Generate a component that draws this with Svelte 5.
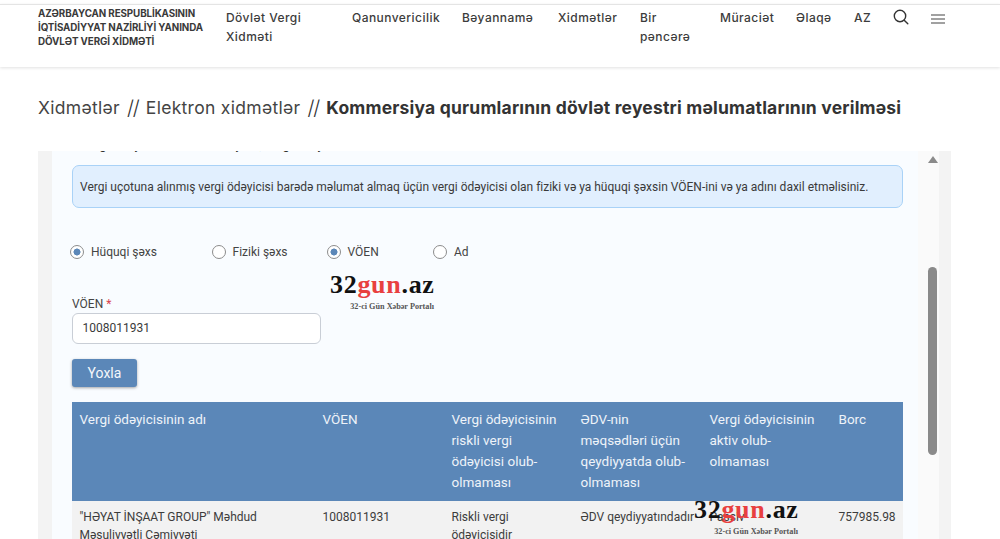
<script>
  const nav = [
    ['Dövlət Vergi', 'Xidməti'],
    ['Qanunvericilik'],
    ['Bəyannamə'],
    ['Xidmətlər'],
    ['Bir', 'pəncərə'],
    ['Müraciət'],
    ['Əlaqə'],
    ['AZ']
  ];
  const radios = [
    { label: 'Hüquqi şəxs', on: true },
    { label: 'Fiziki şəxs', on: false },
    { label: 'VÖEN', on: true },
    { label: 'Ad', on: false }
  ];
  const heads = [
    'Vergi ödəyicisinin adı',
    'VÖEN',
    'Vergi ödəyicisinin riskli vergi ödəyicisi olub-olmaması',
    'ƏDV-nin məqsədləri üçün qeydiyyatda olub-olmaması',
    'Vergi ödəyicisinin aktiv olub-olmaması',
    'Borc'
  ];
  const cells = [
    '"HƏYAT İNŞAAT GROUP" Məhdud Məsuliyyətli Cəmiyyəti',
    '1008011931',
    'Riskli vergi ödəyicisidir',
    'ƏDV qeydiyyatındadır',
    'Passiv',
    '757985.98'
  ];
</script>

<div class="page">
  <header class="top">
    <div class="brand">AZƏRBAYCAN RESPUBLİKASININ<br />İQTİSADİYYAT NAZİRLİYİ YANINDA<br />DÖVLƏT VERGİ XİDMƏTİ</div>
    <nav class="nav">
      {#each nav as item}
        <div class="nav-item">{#each item as line}<div>{line}</div>{/each}</div>
      {/each}
      <svg class="ic-search" width="16" height="16" viewBox="0 0 16 16" fill="none" stroke="#333" stroke-width="1.4">
        <circle cx="7" cy="7" r="5.7" />
        <path d="M11.2 11.2l3.6 3.6" stroke-linecap="round" />
      </svg>
      <svg class="ic-menu" width="14" height="10" viewBox="0 0 14 10" stroke="#444" stroke-width="1.2">
        <path d="M0 1h14M0 5h14M0 9h14" />
      </svg>
    </nav>
  </header>

  <div class="crumbs">
    <span>Xidmətlər</span><i>//</i><span>Elektron xidmətlər</span><i>//</i><b>Kommersiya qurumlarının dövlət reyestri məlumatlarının verilməsi</b>
  </div>

  <section class="panel">
    <div class="content">
      <div class="clipped">Vergi ödəyicisinin adı və soyadı, vergi ödəyi</div>
      <div class="alert">Vergi uçotuna alınmış vergi ödəyicisi barədə məlumat almaq üçün vergi ödəyicisi olan fiziki və ya hüquqi şəxsin VÖEN-ini və ya adını daxil etməlisiniz.</div>
      <div class="radios">
        {#each radios as r}
          <label><span class="dot" class:on={r.on}></span>{r.label}</label>
        {/each}
      </div>
      <div class="field-label">VÖEN <em>*</em></div>
      <div class="input">1008011931</div>
      <button class="btn">Yoxla</button>
      <div class="table">
        {#each heads as h}<div class="th">{h}</div>{/each}
        {#each cells as c}<div class="td">{c}</div>{/each}
      </div>
    </div>
    <div class="rail">
      <div class="arrow"></div>
      <div class="thumb"></div>
    </div>
  </section>

  <div class="mark m1"><div class="logo">32<span>gun</span>.az</div><div class="sub">32-ci Gün Xəbər Portalı</div></div>
  <div class="mark m2"><div class="logo">32<span>gun</span>.az</div><div class="sub">32-ci Gün Xəbər Portalı</div></div>
</div>

<style>
  :global(body) { margin: 0; background: #fff; }
  .page {
    position: relative;
    height: 539px;
    overflow: hidden;
    display: flex;
    flex-direction: column;
    font-family: Roboto, sans-serif;
    color: #333;
  }
  .top {
    flex: none;
    height: 62px;
    margin-top: 4px;
    border-top: 1px solid #e4e4e4;
    box-shadow: 0 1px 3px rgba(0, 0, 0, 0.12);
    display: flex;
    padding-left: 38px;
    font-family: Inter, sans-serif;
    box-sizing: content-box;
  }
  .brand {
    width: 188px;
    padding-top: 2px;
    font-size: 9.8px;
    line-height: 13.8px;
    font-weight: 700;
    color: #3a3a3a;
    letter-spacing: -0.1px;
    white-space: nowrap;
  }
  .nav {
    display: grid;
    grid-template-columns: 126px 110px 96px 82px 80px 76px 58px 39px 37.5px auto;
    align-items: start;
  }
  .nav-item {
    font-size: 12px;
    line-height: 19px;
    font-weight: 500;
    color: #3c3c3c;
    letter-spacing: 0.45px;
    white-space: nowrap;
    padding-top: 3px;
  }
  .ic-search { margin-top: 4px; }
  .ic-menu { margin-top: 9px; }

  .crumbs {
    flex: none;
    height: 81px;
    margin-bottom: 3px;
    display: flex;
    align-items: center;
    padding-left: 38px;
    font-family: Inter, sans-serif;
    font-size: 17.5px;
    color: #444;
    white-space: nowrap;
    letter-spacing: 0.3px;
  }
  .crumbs i { font-style: normal; font-size: 20px; margin: 0 7px; font-weight: 300; letter-spacing: -1px; color: #333; }
  .crumbs b { font-weight: 700; color: #333; letter-spacing: 0.19px; }

  .panel {
    flex: 1;
    min-height: 0;
    margin: 0 49px 0 38px;
    background: #f3f3f3;
    padding: 0 12px 0 14px;
    display: flex;
    overflow: hidden;
  }
  .content {
    flex: 1;
    min-width: 0;
    background: #f9fcff;
    padding: 0 15px 0 20px;
    overflow: hidden;
  }
  .clipped {
    height: 14px;
    margin-top: -13px;
    font-size: 13px;
    line-height: 14px;
    white-space: nowrap;
    padding-left: 8px;
  }
  .alert {
    margin-top: 13px;
    height: 41px;
    border: 1px solid #a9d2f7;
    border-radius: 7px;
    background: #e1effe;
    padding-left: 7px;
    display: flex;
    align-items: center;
    font-size: 12px;
    letter-spacing: -0.006px;
    color: #3a3a3a;
    white-space: nowrap;
  }
  .radios {
    display: grid;
    grid-template-columns: 141.5px 115px 106.5px auto;
    margin: 34px 0 0 -2px;
    height: 20px;
    align-items: center;
    font-size: 12px;
    color: #444;
  }
  .radios label { display: flex; align-items: center; gap: 7px; }
  .dot {
    width: 14px;
    height: 14px;
    box-sizing: border-box;
    border: 1px solid #8c8c8c;
    border-radius: 50%;
    background: #fff;
    display: block;
  }
  .dot.on {
    background: radial-gradient(circle, #5b87b8 0 3.2px, #fff 3.8px);
  }
  .field-label {
    margin-top: 35px;
    font-size: 12px;
    line-height: 14px;
    color: #444;
  }
  .field-label em { font-style: normal; color: #d9434e; }
  .input {
    margin-top: 2px;
    width: 249px;
    height: 31px;
    box-sizing: border-box;
    border: 1px solid #c9ced6;
    border-radius: 6px;
    background: #fff;
    padding-left: 9.5px;
    font-size: 12px;
    line-height: 29px;
    color: #3a3a3a;
  }
  .btn {
    display: block;
    margin: 15px 0 0;
    width: 65px;
    height: 28px;
    border: 0;
    border-radius: 3px;
    background: #5b87b8;
    color: #f4f7fb;
    font-family: Roboto, sans-serif;
    font-size: 14px;
    font-weight: 400;
    box-shadow: 0 1px 3px rgba(0, 0, 0, 0.35);
  }
  .table {
    margin-top: 15px;
    display: grid;
    grid-template-columns: 243px 129px 129px 129px 129px 72px;
    width: 831px;
  }
  .th {
    background: #5b87b8;
    color: #eef3f9;
    height: 99px;
    box-sizing: border-box;
    padding: 7px 7.5px 0;
    font-size: 13.5px;
    line-height: 21px;
  }
  .td {
    background: #f2f2f2;
    padding: 7px 7.5px;
    font-size: 12px;
    line-height: 18px;
    color: #3c3c3c;
    min-height: 60px;
  }
  .td:nth-child(10) { white-space: nowrap; }
  .rail {
    position: relative;
    flex: none;
    width: 21px;
    background: #fafafa;
  }
  .arrow {
    position: absolute;
    left: 10px;
    top: 5px;
    width: 0;
    height: 0;
    border-left: 5px solid transparent;
    border-right: 5px solid transparent;
    border-bottom: 7px solid #8a8a8a;
  }
  .thumb {
    position: absolute;
    left: 10px;
    top: 116px;
    width: 9px;
    height: 188px;
    border-radius: 5px;
    background: #8a8a8a;
  }
  .mark {
    position: absolute;
    width: 104px;
    text-align: right;
    pointer-events: none;
  }
  .m1 { left: 330px; top: 270px; }
  .m2 { left: 694px; top: 495px; }
  .logo {
    font-family: "Liberation Serif", serif;
    font-weight: 700;
    font-size: 26px;
    line-height: 30px;
    letter-spacing: 0.7px;
    color: #111;
    white-space: nowrap;
    text-align: left;
  }
  .logo span { color: #e8403f; }
  .sub {
    font-family: "Liberation Serif", serif;
    font-weight: 700;
    font-size: 8.2px;
    line-height: 10px;
    margin-top: 2px;
    color: #555;
    white-space: nowrap;
  }
</style>
